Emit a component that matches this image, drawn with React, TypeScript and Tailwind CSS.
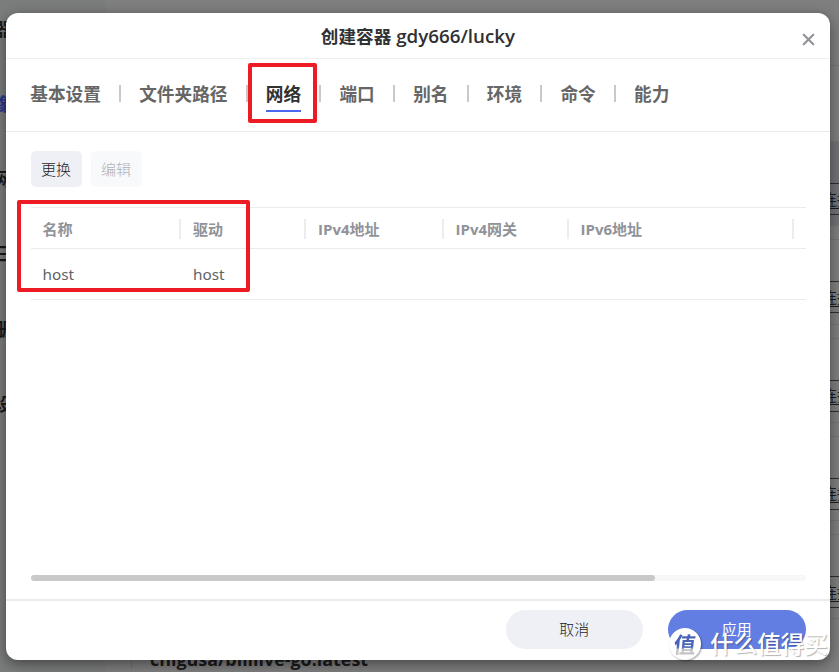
import { X } from "lucide-react";

const sideItems = [
  { label: "器", color: "text-[#19191a]" },
  { label: "像", color: "text-[#27348c]" },
  { label: "网", color: "text-[#19191a]" },
  { label: "日", color: "text-[#19191a]" },
  { label: "册", color: "text-[#19191a]" },
  { label: "设", color: "text-[#19191a]" },
];

const tabs = ["基本设置", "文件夹路径", "网络", "端口", "别名", "环境", "命令", "能力"];
const activeTab = "网络";

const columns = [
  { title: "名称", width: "w-[150.5px]" },
  { title: "驱动", width: "w-[125px]" },
  { title: "IPv4地址", width: "w-[137.5px]" },
  { title: "IPv4网关", width: "w-[125px]" },
  { title: "IPv6地址", width: "w-[225px]" },
];

const row = ["host", "host", "", "", ""];

function Backdrop() {
  return (
    <div className="flex h-full w-full overflow-hidden bg-[#7f7f7f]">
      <aside className="flex w-[106px] shrink-0 flex-col bg-[#7b7c7c] pt-[17px]">
        {sideItems.map((item) => (
          <div
            key={item.label}
            className={`-ml-[6px] h-[75px] w-[18px] text-[18px] leading-[24px] font-bold whitespace-nowrap ${item.color}`}
          >
            {item.label}
          </div>
        ))}
      </aside>
      <main className="flex flex-1 flex-col">
        <div className="h-[66px] border-b border-[#747474]" />
        <div className="flex h-[75px]" />
        <div className="flex h-[507px] flex-col gap-[13px]">
          {[0, 1, 2, 3, 4].map((i) => (
            <div
              key={i}
              className={`flex h-[85.3px] shrink-0 justify-end border-y border-[#747474] pt-[41px] ${i === 0 ? "bg-[#717378]" : ""}`}
            >
              <div className="-mr-[28px] flex h-[32px] w-[60px] shrink-0 items-center justify-center border-y border-[#2e2e2e] text-[15px] leading-[18px] whitespace-nowrap text-[#1c1c1c]">
                <span className="border-b border-[#1c1c1c]">连接</span>
              </div>
            </div>
          ))}
        </div>
        <div className="-mt-[14px] ml-[25px] h-[35px] border-l border-[#707070] pt-[13px] pl-[18px] text-[17.9px] leading-[24px] font-bold text-[#1b1b1b]">
          chigusa/bililive-go:latest
        </div>
      </main>
    </div>
  );
}

function Tabs() {
  return (
    <nav className="flex h-[73px] shrink-0 items-center border-b border-[#e9e9eb] pb-[3px] pl-[24.3px] text-[17.65px] leading-[24px] font-bold">
      {tabs.map((tab, i) => (
        <div key={tab} className="flex items-center">
          {i > 0 && <span className="mx-[18.2px] h-[17px] w-[2px] bg-[#c8c9cc]" />}
          <div className={`relative ${tab === activeTab ? "text-[#303133]" : "text-[#666666]"}`}>
            {tab}
            {tab === activeTab && (
              <>
                <span className="absolute inset-x-0 top-[28px] h-[2px] bg-[#4b68f0]" />
                <span className="absolute -top-[19px] -left-[18.3px] h-[60px] w-[69px] rounded-[2px] border-4 border-[#ed1c24]" />
              </>
            )}
          </div>
        </div>
      ))}
    </nav>
  );
}

function NetworkTable() {
  return (
    <div className="relative mt-5 text-[15px]">
      <div className="flex h-[42px] items-center border-y border-[#ebebed] pt-[2px] font-bold text-[#909399]">
        {columns.map((col) => (
          <div
            key={col.title}
            className={`flex h-5 shrink-0 items-center border-r-2 border-[#ededef] pl-3 leading-5 ${col.width}`}
          >
            {col.title}
          </div>
        ))}
      </div>
      <div className="flex h-[51px] items-center border-b border-[#ebebed] font-['Noto_Sans'] text-[15.3px] text-[#606266]">
        {row.map((cell, i) => (
          <div key={i} className={`shrink-0 pl-3 leading-5 ${columns[i].width}`}>
            {cell}
          </div>
        ))}
      </div>
      <span className="absolute -top-[7px] -left-[13.5px] h-[92px] w-[233px] rounded-[2px] border-4 border-[#ed1c24]" />
    </div>
  );
}

function Watermark() {
  return (
    <div className="absolute top-[628px] left-[669px] flex items-center text-white">
      <span className="flex h-8 w-8 items-center justify-center rounded-full bg-white shadow-[1px_1px_2px_rgba(0,0,0,0.35)]">
        <span className="-skew-x-6 bg-linear-to-b from-[#4a63b8] from-60% to-[#c4c4c6] to-70% bg-clip-text text-[22px] leading-7 font-bold text-transparent">
          值
        </span>
      </span>
      <span className="ml-[9px] text-[23.6px] leading-8 font-medium whitespace-nowrap [text-shadow:1px_1px_1px_rgba(0,0,0,0.3)]">
        什么值得买
      </span>
    </div>
  );
}

export default function App() {
  return (
    <div className="relative h-[672px] w-[839px] overflow-hidden font-['Open_Sans','Noto_Sans_CJK_SC',sans-serif]">
      <Backdrop />
      <div className="absolute top-[13px] left-[6px] flex h-[647px] w-[824px] flex-col rounded-[12px] bg-white shadow-[0_4px_14px_rgba(0,0,0,0.45)]">
        <header className="relative flex h-[46px] shrink-0 items-center justify-center border-b border-[#efefef] text-[17.6px] leading-6 font-semibold text-[#303133]">
          <h1 className="whitespace-pre">
            创建容器<span className="text-[18.8px]"> gdy666/lucky</span>
          </h1>
          <X className="absolute top-[17px] right-[12.5px] h-[19px] w-[19px] text-[#909399]" strokeWidth={2.7} />
        </header>
        <Tabs />
        <section className="flex flex-1 flex-col px-[24.5px] pt-[19px]">
          <div className="flex gap-[9px] text-[15px] font-light">
            <button className="h-9 w-[51px] rounded-[5px] bg-[#eff0f5] text-[#1c1d1f]">更换</button>
            <button className="h-9 w-[51px] rounded-[5px] bg-[#f8f9fb] text-[#b0b1b5]">编辑</button>
          </div>
          <NetworkTable />
          <div className="mt-auto mb-[18.5px] h-[6px] rounded-full bg-[#f7f7f7]">
            <div className="h-[6px] w-[624px] rounded-full bg-[#c9c9c9]" />
          </div>
        </section>
        <footer className="flex h-[61px] shrink-0 justify-end gap-[25px] border-t-2 border-[#ebebed] pt-[9px] pr-[24.5px] text-[15px]">
          <button className="h-[39px] w-[137.5px] rounded-full bg-[#eff0f5] pb-[1px] font-light text-[#1c1d1f]">取消</button>
          <button className="h-[39px] w-[137.5px] rounded-full bg-[#627ee2] pb-[1px] text-white">应用</button>
        </footer>
      </div>
      <Watermark />
    </div>
  );
}
